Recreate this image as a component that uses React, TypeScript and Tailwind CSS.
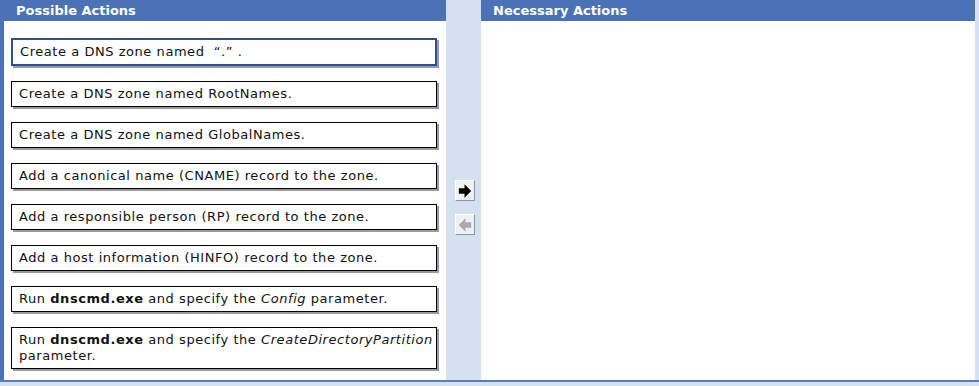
import type { ReactNode } from 'react';

const items: ReactNode[] = [
  <>Create a DNS zone named&nbsp; “.” .</>,
  <>Create a DNS zone named RootNames.</>,
  <>Create a DNS zone named GlobalNames.</>,
  <>Add a canonical name (CNAME) record to the zone.</>,
  <>Add a responsible person (RP) record to the zone.</>,
  <>Add a host information (HINFO) record to the zone.</>,
  <>
    Run <b>dnscmd.exe</b> and specify the <i>Config</i> parameter.
  </>,
  <>
    <span className="whitespace-nowrap">
      Run <b>dnscmd.exe</b> and specify the <i>CreateDirectoryPartition</i>
    </span>
    <br />
    parameter.
  </>,
];

function ArrowButton({ dir, disabled }: { dir: 'right' | 'left'; disabled?: boolean }) {
  const pts = dir === 'right' ? '3,6 9,6 9,2 16,9 9,16 9,12 3,12' : '16,6 10,6 10,2 3,9 10,16 10,12 16,12';
  return (
    <div className="w-[20px] h-[21px] bg-[#eef0f2] border border-t-white border-l-white border-r-[#8a96a6] border-b-[#8a96a6] flex items-center justify-center">
      <svg width="18" height="18" viewBox="0 0 19 18">
        <polygon points={pts} fill={disabled ? '#a9a9b4' : '#000'} />
      </svg>
    </div>
  );
}

export default function App() {
  return (
    <div className="w-[979px] h-[386px] bg-[#d5e1f0] flex flex-col font-['DejaVu_Sans',Verdana,sans-serif] overflow-hidden">
      <div className="flex h-[380px]">
        <div className="w-[446px] flex flex-col border-l-[4px] border-[#4a72b4]">
          <div className="h-[21px] bg-[#4a72b4] text-white font-bold text-[13px] leading-[21px] pl-[12px]">
            Possible Actions
          </div>
          <div className="flex-1 bg-white pl-[7px] pr-[9px] pt-[17px] flex flex-col gap-[15px]">
            {items.map((it, i) => (
              <div
                key={i}
                className={
                  'text-[13px] tracking-[0.55px] leading-[16px] text-[#111] bg-white pl-[7px] pr-[2px] py-[4px] shadow-[2px_2px_0_#9a9a9a] overflow-hidden ' +
                  (i === 0 ? 'border-2 border-[#2f4f8f] py-[3px] pl-[6px]' : 'border border-black')
                }
              >
                {it}
              </div>
            ))}
          </div>
        </div>
        <div className="w-[35px] flex flex-col items-center pt-[180px] gap-[13px] pl-[2px]">
          <ArrowButton dir="right" />
          <ArrowButton dir="left" disabled />
        </div>
        <div className="w-[494px] flex flex-col">
          <div className="h-[21px] bg-[#4a72b4] text-white font-bold text-[13px] leading-[21px] pl-[12px]">
            Necessary Actions
          </div>
          <div className="flex-1 bg-white" />
        </div>
      </div>
      <div className="h-[2px] bg-[#5a7fb8]" />
    </div>
  );
}
